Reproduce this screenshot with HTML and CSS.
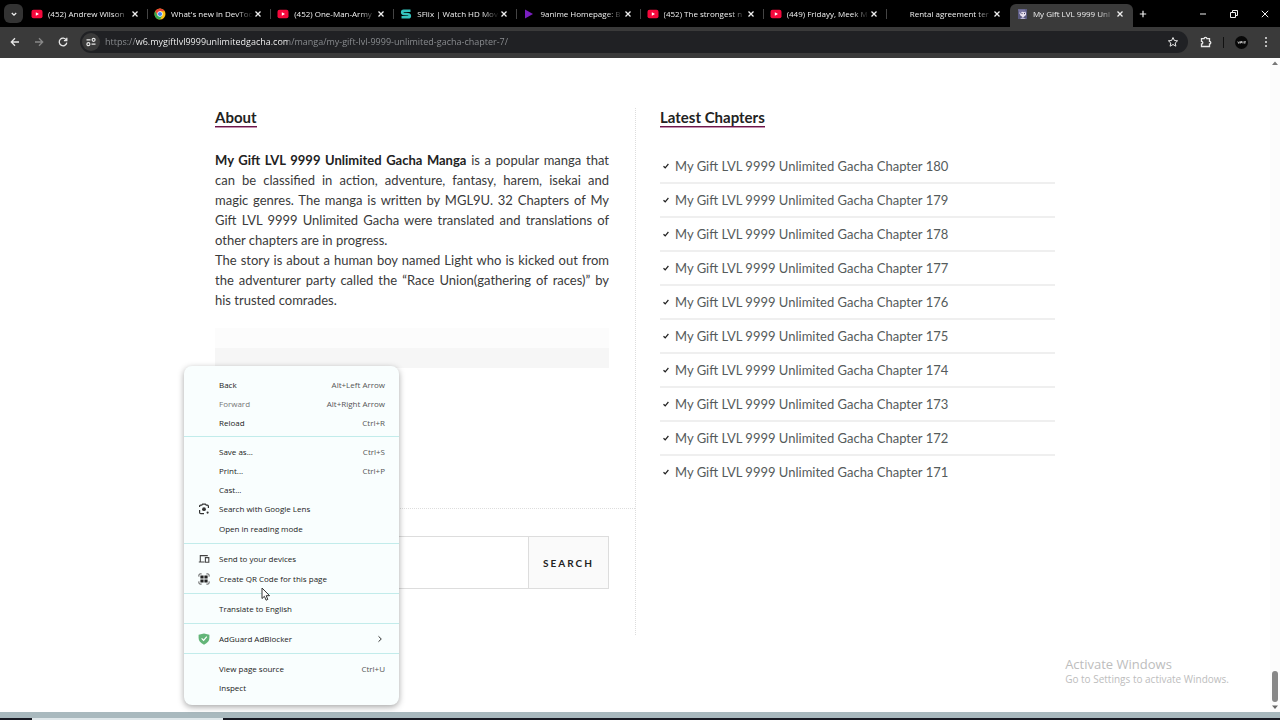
FILE: index.html
```html
<!DOCTYPE html>
<html lang="en">
<head>
    <meta charset="UTF-8">
    <meta name="viewport" content="width=device-width, initial-scale=1.0">
    <title>My Gift LVL 9999 Unlimited Gacha</title>
    <link rel="stylesheet" href="styles.css">
</head>
<body>
    <svg class="sprite" aria-hidden="true">
        <symbol id="x" viewBox="0 0 10 10"><path d="M2.5 2.5l5 5M7.5 2.5l-5 5" fill="none" stroke="currentColor" stroke-width="1.3"/></symbol>
        <symbol id="youtube" viewBox="0 0 12 12"><rect x="0.5" y="1.8" width="11" height="8.4" rx="2" fill="#f5093c"/><path d="M4.8 4.2v3.6L8 6z" fill="#fff"/></symbol>
        <symbol id="check" viewBox="0 0 8 8"><path d="M1.5 4.2l1.7 1.6L6.4 2" fill="none" stroke="#222" stroke-width="1.2"/></symbol>
    </svg>

    <div class="tab-strip">
        <button class="tab-search" aria-label="Search tabs"><svg viewBox="0 0 10 10"><path d="M2.8 4l2.2 2.2L7.2 4" fill="none" stroke="currentColor" stroke-width="1.3"/></svg></button>
        <div class="tabs">
            <div class="tab"><svg class="favicon"><use href="#youtube"/></svg><span class="tab-title">(452) Andrew Wilson</span><button class="tab-close" aria-label="Close tab"><svg><use href="#x"/></svg></button></div>
            <div class="tab">
                <svg class="favicon" viewBox="0 0 12 12"><circle cx="6" cy="6" r="5.5" fill="#fbc116"/><path d="M1.2 3.3A5.5 5.5 0 0 1 10.8 3.3H6L3.6 7.4z" fill="#ea4335"/><path d="M1.2 3.3A5.5 5.5 0 0 0 6 11.5L8.4 7.4H3.6z" fill="#34a853"/><circle cx="6" cy="6" r="2.7" fill="#fff"/><circle cx="6" cy="6" r="2.1" fill="#4285f4"/></svg>
                <span class="tab-title">What's new in DevToo</span><button class="tab-close" aria-label="Close tab"><svg><use href="#x"/></svg></button>
            </div>
            <div class="tab"><svg class="favicon"><use href="#youtube"/></svg><span class="tab-title">(452) One-Man-Army</span><button class="tab-close" aria-label="Close tab"><svg><use href="#x"/></svg></button></div>
            <div class="tab">
                <svg class="favicon" viewBox="0 0 12 12"><path d="M10.5 2.8H3.6Q2.2 2.8 2.2 4.2 2.2 5.7 4 5.9L8 6.2Q9.8 6.4 9.8 7.9 9.8 9.3 8.2 9.3H1.5" fill="none" stroke="#35c3bd" stroke-width="2.6"/></svg>
                <span class="tab-title">SFlix | Watch HD Mov</span><button class="tab-close" aria-label="Close tab"><svg><use href="#x"/></svg></button>
            </div>
            <div class="tab">
                <svg class="favicon" viewBox="0 0 12 12"><path d="M2 1.5v9l8-4.5z" fill="#7a1fc0"/></svg>
                <span class="tab-title">9anime Homepage: B</span><button class="tab-close" aria-label="Close tab"><svg><use href="#x"/></svg></button>
            </div>
            <div class="tab"><svg class="favicon"><use href="#youtube"/></svg><span class="tab-title">(452) The strongest n</span><button class="tab-close" aria-label="Close tab"><svg><use href="#x"/></svg></button></div>
            <div class="tab"><svg class="favicon"><use href="#youtube"/></svg><span class="tab-title">(449) Fridayy, Meek M</span><button class="tab-close" aria-label="Close tab"><svg><use href="#x"/></svg></button></div>
            <div class="tab"><svg class="favicon"></svg><span class="tab-title">Rental agreement ter</span><button class="tab-close" aria-label="Close tab"><svg><use href="#x"/></svg></button></div>
            <div class="tab active">
                <svg class="favicon" viewBox="0 0 12 12"><rect x="2" y="1" width="9" height="10" fill="#59597f"/><path d="M3 4.5Q6 1.5 10 4v3L7 9.5 4.5 7.5z" fill="#e9e2f0"/><path d="M2 1.5h7l1 3-4-.8-2 2.3z" fill="#77749f"/><path d="M5.5 5.6h1M8 5.6h1" stroke="#33304f"/><path d="M4 11l2.5-2L10 11z" fill="#b9b4d2"/></svg>
                <span class="tab-title">My Gift LVL 9999 Unl</span><button class="tab-close" aria-label="Close tab"><svg><use href="#x"/></svg></button>
            </div>
        </div>
        <button class="new-tab" aria-label="New tab"><svg viewBox="0 0 10 10"><path d="M5 1.8v6.4M1.8 5h6.4" stroke="currentColor" stroke-width="1.2"/></svg></button>
        <div class="window-buttons">
            <button aria-label="Minimize"><svg viewBox="0 0 10 10"><path d="M2 5h6" stroke="currentColor"/></svg></button>
            <button aria-label="Restore"><svg viewBox="0 0 10 10"><path d="M1.5 3.5h5v5h-5zM3.5 3V1.5h5v5H7" fill="none" stroke="currentColor"/></svg></button>
            <button aria-label="Close"><svg viewBox="0 0 10 10"><path d="M1.8 1.8l6.4 6.4M8.2 1.8L1.8 8.2" stroke="currentColor"/></svg></button>
        </div>
    </div>

    <div class="toolbar">
        <button class="nav-button" aria-label="Back"><svg viewBox="0 0 12 12"><path d="M10 6H2.5M6 2.3L2.3 6 6 9.7" fill="none" stroke="currentColor" stroke-width="1.3"/></svg></button>
        <button class="nav-button dim" aria-label="Forward"><svg viewBox="0 0 12 12"><path d="M2 6h7.5M6 2.3L9.7 6 6 9.7" fill="none" stroke="currentColor" stroke-width="1.3"/></svg></button>
        <button class="nav-button" aria-label="Reload"><svg viewBox="0 0 12 12"><path d="M9.3 4A3.8 3.8 0 1 0 9.8 6.6M9.8 1.8v2.9H6.9" fill="none" stroke="currentColor" stroke-width="1.3"/></svg></button>
        <div class="address-bar">
            <button class="site-info" aria-label="Site information"><svg viewBox="0 0 12 12"><path d="M1.5 3.8h4M6.5 8.2h4" stroke="currentColor" stroke-width="1.2"/><circle cx="8.6" cy="3.8" r="1.5" fill="none" stroke="currentColor" stroke-width="1.2"/><circle cx="3.4" cy="8.2" r="1.5" fill="none" stroke="currentColor" stroke-width="1.2"/></svg></button>
            <input class="url" type="text" aria-label="Address" value="https://w6.mygiftlvl9999unlimitedgacha.com/manga/my-gift-lvl-9999-unlimited-gacha-chapter-7/">
            <button class="bookmark" aria-label="Bookmark"><svg viewBox="0 0 12 12"><path d="M6 1.5l1.4 3 3.2.3-2.4 2.2.7 3.2L6 8.5l-2.9 1.7.7-3.2-2.4-2.2 3.2-.3z" fill="none" stroke="currentColor"/></svg></button>
        </div>
        <button class="extensions" aria-label="Extensions"><svg viewBox="0 0 12 12"><path d="M1.5 2.7h2.6a1.4 1.4 0 0 1 2.8 0h2.6v2.7a1.3 1.3 0 0 1 0 2.6v2.5h-8V8a1.3 1.3 0 0 0 0-2.6z" fill="none" stroke="currentColor" stroke-width="1.3"/></svg></button>
        <span class="toolbar-separator"></span>
        <button class="profile" aria-label="Profile"><svg viewBox="0 0 13 13"><circle cx="6.5" cy="6.5" r="6.5" fill="#080808"/><path d="M2.8 5.5l1 2 .8-2M5.6 7.5v-2h1.3v1H5.6M8 7.5v-2M8.8 5.8H11M9.8 5.8v2" fill="none" stroke="#ddd" stroke-width=".8"/></svg></button>
        <button class="more" aria-label="More"><svg viewBox="0 0 12 12"><circle cx="6" cy="2" r="1" fill="currentColor"/><circle cx="6" cy="6" r="1" fill="currentColor"/><circle cx="6" cy="10" r="1" fill="currentColor"/></svg></button>
    </div>

    <div class="viewport">
        <main class="page">
            <div class="columns">
                <div class="left">
                    <section class="about">
                        <h2>About</h2>
                        <p><strong>My Gift LVL 9999 Unlimited Gacha Manga</strong> is a popular manga that can be classified in action, adventure, fantasy, harem, isekai and magic genres. The manga is written by MGL9U. 32 Chapters of My Gift LVL 9999 Unlimited Gacha were translated and translations of other chapters are in progress.</p>
                        <p>The story is about a human boy named Light who is kicked out from the adventurer party called the “Race Union(gathering of races)” by his trusted comrades.</p>
                        <div class="banner"></div>
                    </section>
                    <form class="search-form">
                        <input type="search" aria-label="Search">
                        <button type="submit">SEARCH</button>
                    </form>
                </div>
                <section class="right">
                    <h2>Latest Chapters</h2>
                    <ul class="chapters">
                        <li><svg><use href="#check"/></svg><a href="#">My Gift LVL 9999 Unlimited Gacha Chapter 180</a></li>
                        <li><svg><use href="#check"/></svg><a href="#">My Gift LVL 9999 Unlimited Gacha Chapter 179</a></li>
                        <li><svg><use href="#check"/></svg><a href="#">My Gift LVL 9999 Unlimited Gacha Chapter 178</a></li>
                        <li><svg><use href="#check"/></svg><a href="#">My Gift LVL 9999 Unlimited Gacha Chapter 177</a></li>
                        <li><svg><use href="#check"/></svg><a href="#">My Gift LVL 9999 Unlimited Gacha Chapter 176</a></li>
                        <li><svg><use href="#check"/></svg><a href="#">My Gift LVL 9999 Unlimited Gacha Chapter 175</a></li>
                        <li><svg><use href="#check"/></svg><a href="#">My Gift LVL 9999 Unlimited Gacha Chapter 174</a></li>
                        <li><svg><use href="#check"/></svg><a href="#">My Gift LVL 9999 Unlimited Gacha Chapter 173</a></li>
                        <li><svg><use href="#check"/></svg><a href="#">My Gift LVL 9999 Unlimited Gacha Chapter 172</a></li>
                        <li><svg><use href="#check"/></svg><a href="#">My Gift LVL 9999 Unlimited Gacha Chapter 171</a></li>
                    </ul>
                </section>
            </div>
        </main>
        <div class="scrollbar">
            <svg viewBox="0 0 10 10"><path d="M2 7l3-3.5L8 7z" fill="#777"/></svg>
            <span class="thumb"></span>
            <svg viewBox="0 0 10 10"><path d="M2 3.5L5 7l3-3.5z" fill="#666"/></svg>
        </div>
    </div>
    <div class="taskbar"><span class="taskbar-item"></span></div>

    <div class="watermark">
        <p class="watermark-title">Activate Windows</p>
        <p>Go to Settings to activate Windows.</p>
    </div>

    <div class="context-menu">
        <button><span>Back</span><kbd>Alt+Left Arrow</kbd></button>
        <button class="disabled"><span>Forward</span><kbd>Alt+Right Arrow</kbd></button>
        <button><span>Reload</span><kbd>Ctrl+R</kbd></button>
        <hr>
        <button><span>Save as...</span><kbd>Ctrl+S</kbd></button>
        <button><span>Print...</span><kbd>Ctrl+P</kbd></button>
        <button><span>Cast...</span></button>
        <button class="tall">
            <svg viewBox="0 0 12 12"><path d="M1.6 4V3.2q0-1 1-1h1.2l.8-1h2.8l.8 1h1.2q1 0 1 1V5M1.6 7v2.4q0 1.2 1.2 1.2H6" fill="none" stroke="#333" stroke-width="1.2"/><circle cx="6" cy="6.2" r="1.9" fill="#333"/><circle cx="9.6" cy="9.6" r="1.1" fill="#333"/></svg>
            <span>Search with Google Lens</span>
        </button>
        <button class="tall"><span>Open in reading mode</span></button>
        <hr>
        <button class="tall">
            <svg viewBox="0 0 12 12"><path d="M2.3 8.5V2.6h7.5M.8 9h5.7M7.4 4.6h3.4v4.7H7.4z" fill="none" stroke="#444" stroke-width="1.1"/></svg>
            <span>Send to your devices</span>
        </button>
        <button class="tall">
            <svg viewBox="0 0 12 12"><path d="M.9 3.6V2.1Q.9.9 2.1.9h1.5M8.4.9h1.5q1.2 0 1.2 1.2v1.5M11.1 8.4v1.5q0 1.2-1.2 1.2H8.4M3.6 11.1H2.1Q.9 11.1.9 9.9V8.4" fill="none" stroke="#555"/><path d="M2.4 2.4h3.2v3.2H2.4zM6.4 2.4h3.2v3.2H6.4zM2.4 6.4h3.2v3.2H2.4zM6.4 6.4h3.2v3.2H6.4z" fill="#222"/></svg>
            <span>Create QR Code for this page</span>
        </button>
        <hr>
        <button class="tall"><span>Translate to English</span></button>
        <hr>
        <button class="tall">
            <svg viewBox="0 0 12 12"><path d="M6 .5L11.4 1.7V5q0 4-5.4 6.7Q.6 9 .6 5V1.7z" fill="#63b578"/><path d="M3.6 5.4l2 2 3.2-3.8" fill="none" stroke="#fff" stroke-width="1.2"/></svg>
            <span>AdGuard AdBlocker</span>
            <svg class="submenu" viewBox="0 0 10 10"><path d="M3.5 2.3L6.3 5 3.5 7.7" fill="none" stroke="#333"/></svg>
        </button>
        <hr>
        <button><span>View page source</span><kbd>Ctrl+U</kbd></button>
        <button><span>Inspect</span></button>
    </div>
    <svg class="cursor" viewBox="0 0 10 14"><path d="M1 1v10.5l2.4-2.2 1.7 3.9 1.7-.8-1.6-3.7H8.6z" fill="#fff" stroke="#333"/></svg>
</body>
</html>
```

FILE: styles.css
```css
:root {
    --ui-font: "Open Sans", "Noto Sans", sans-serif;
    --bar-bg: #3a3a3a;
    --field-bg: #202124;
    --accent: #6b1748;
    --accent-light: #c48fb0;
    --rule: #efefef;
}

* {
    box-sizing: border-box;
}

body {
    margin: 0;
    min-height: 100vh;
    display: flex;
    flex-direction: column;
    position: relative;
    background-color: #fff;
    font-family: Lato, sans-serif;
    font-size: 13px;
    line-height: 20px;
    color: #3a3a3a;
}

button {
    display: flex;
    align-items: center;
    justify-content: center;
    padding: 0;
    border: none;
    background: none;
    color: inherit;
    font: inherit;
}

p, h2, ul {
    margin: 0;
    padding: 0;
}

svg {
    flex: none;
    display: block;
}

.sprite {
    position: absolute;
    width: 0;
    height: 0;
}

/* tabs */
.tab-strip {
    display: flex;
    align-items: center;
    height: 27px;
    padding-left: 4px;
    background-color: #000;
    color: #f0f0f0;
    font-family: var(--ui-font);
    font-size: 8px;
    line-height: 12px;
}

.tab-search {
    width: 19px;
    height: 19px;
    border-radius: 6px;
    background-color: #333;
}

.tab-search svg, .new-tab svg, .window-buttons svg {
    width: 10px;
    height: 10px;
}

.tabs {
    flex: 1;
    min-width: 0;
    display: flex;
    align-self: stretch;
    align-items: flex-end;
    margin-left: 2px;
}

.tab {
    flex: 1;
    min-width: 0;
    display: flex;
    align-items: center;
    height: 23px;
    padding: 0 8px 4px 6px;
    position: relative;
}

.tab::after {
    content: "";
    width: 1px;
    height: 10px;
    background-color: #444;
    position: absolute;
    right: 0;
    top: 5px;
}

.tab:nth-last-child(-n+2)::after {
    display: none;
}

.tab.active {
    background-color: var(--bar-bg);
    border-radius: 6px 6px 0 0;
}

.favicon {
    width: 12px;
    height: 12px;
    margin-right: 5px;
}

.tab-title {
    flex: 1;
    min-width: 0;
    overflow: hidden;
    white-space: nowrap;
    mask-image: linear-gradient(to right, #000 80%, transparent);
}

.tab-close svg {
    width: 10px;
    height: 10px;
}

.new-tab {
    width: 20px;
}

.window-buttons {
    display: flex;
    margin-left: 34px;
}

.window-buttons button {
    width: 31px;
}

/* toolbar */
.toolbar {
    display: flex;
    align-items: center;
    height: 31px;
    padding: 0 8px 1px;
    background-color: var(--bar-bg);
    color: #e8e8e8;
    font-family: var(--ui-font);
    font-size: 9px;
}

.toolbar svg {
    width: 12px;
    height: 12px;
}

.nav-button {
    width: 14px;
    margin-right: 10px;
}

.dim {
    color: #888;
}

.address-bar {
    flex: 1;
    display: flex;
    align-items: center;
    height: 22px;
    padding: 0 9px 0 2px;
    border-radius: 11px;
    background-color: var(--field-bg);
}

.site-info {
    width: 18px;
    height: 18px;
    border-radius: 9px;
    background-color: var(--bar-bg);
}

/* the host part of the address is brighter than the rest */
.url {
    flex: 1;
    min-width: 0;
    height: 16px;
    margin-left: 5px;
    padding: 0;
    border: none;
    outline: none;
    font: inherit;
    color: transparent;
    background-image: linear-gradient(to right, #8e9194 30px, #fff 30px, #fff 183px, #8e9194 183px);
    background-clip: text;
}

.extensions {
    margin-left: 12px;
}

.toolbar-separator {
    width: 1px;
    height: 11px;
    margin: 0 11px;
    background-color: #111;
}

.profile svg {
    width: 13px;
    height: 13px;
}

.more {
    margin-left: 12px;
}

/* page */
.viewport {
    flex: 1;
    display: flex;
}

.page {
    flex: 1;
    padding: 50px 24px 0;
}

.columns {
    display: grid;
    grid-template-columns: 1fr 1fr;
    max-width: 840px;
    margin: 0 auto;
}

.about {
    height: 401px;
    border-bottom: 1px dotted #ddd;
}

.about p {
    margin-right: 26px;
    text-align: justify;
}

.about strong {
    color: #222;
}

h2 {
    display: table;
    margin-bottom: 23px;
    border-bottom: 1px solid var(--accent);
    box-shadow: 0 1px var(--accent-light);
    color: #222;
    font-size: 15px;
    line-height: 18px;
}

.banner {
    height: 40px;
    margin: 18px 26px 0 0;
    background: linear-gradient(#fcfcfc 50%, #f6f6f6 50%);
}

.search-form {
    display: flex;
    height: 53px;
    margin: 27px 26px 46px 0;
}

.search-form input {
    flex: 1;
    min-width: 0;
    border: 1px solid #ddd;
    border-right: none;
    padding: 0 12px;
    font: inherit;
}

.search-form button {
    width: 81px;
    border: 1px solid #ddd;
    background-color: #fafafa;
    color: #222;
    font-size: 10px;
    font-weight: bold;
    letter-spacing: 2px;
}

.right {
    padding-left: 24px;
    border-left: 1px dotted #ddd;
}

.chapters {
    list-style: none;
}

.chapters li {
    display: flex;
    align-items: center;
    gap: 5px;
    padding: 6px 0 6px 2px;
    border-bottom: 2px solid var(--rule);
}

.chapters li:last-child {
    border-bottom: none;
}

.chapters svg {
    width: 8px;
    height: 8px;
}

.chapters a {
    color: #555b5b;
    text-decoration: none;
}

.scrollbar {
    width: 10px;
    display: flex;
    flex-direction: column;
    background-color: #fcfcfc;
}

.scrollbar svg {
    width: 10px;
    height: 10px;
}

.thumb {
    width: 6px;
    height: 31px;
    margin: auto 2px 0;
    border-radius: 3px;
    background-color: #888;
}

.taskbar {
    height: 8px;
    padding-left: 32px;
    border-top: 6px solid #a9b9be;
    background-color: #181922;
}

.taskbar-item {
    display: block;
    width: 191px;
    height: 2px;
    background-color: #dfe7ea;
}

.watermark {
    position: absolute;
    right: 51px;
    bottom: 34px;
    color: #bdbdbd;
    font-family: var(--ui-font);
    font-size: 10px;
    line-height: 14px;
}

.watermark-title {
    font-size: 13px;
    line-height: 16px;
}

/* context menu */
.context-menu {
    position: absolute;
    left: 184px;
    top: 366px;
    width: 215px;
    padding: 9px 0 8px;
    border-radius: 8px;
    background-color: #f9fefe;
    box-shadow: 0 2px 6px rgba(0, 0, 0, 0.35);
    color: #222;
    font-family: var(--ui-font);
    font-size: 8px;
    line-height: 12px;
}

.context-menu button {
    width: 100%;
    height: 19px;
    padding: 0 14px 0 35px;
    justify-content: flex-start;
}

.context-menu button.tall {
    height: 20px;
}

.context-menu svg {
    width: 12px;
    height: 12px;
    margin: 0 9px 0 -21px;
}

.context-menu .submenu {
    width: 10px;
    height: 10px;
    margin: 0 0 0 auto;
}

.context-menu kbd {
    margin-left: auto;
    font: inherit;
    color: #555;
}

.context-menu .disabled {
    color: #777;
}

.context-menu hr {
    height: 1px;
    margin: 4px 0 5px;
    border: none;
    background-color: #c2eceb;
}

.cursor {
    position: absolute;
    left: 261px;
    top: 587px;
    width: 10px;
    height: 14px;
}
```
